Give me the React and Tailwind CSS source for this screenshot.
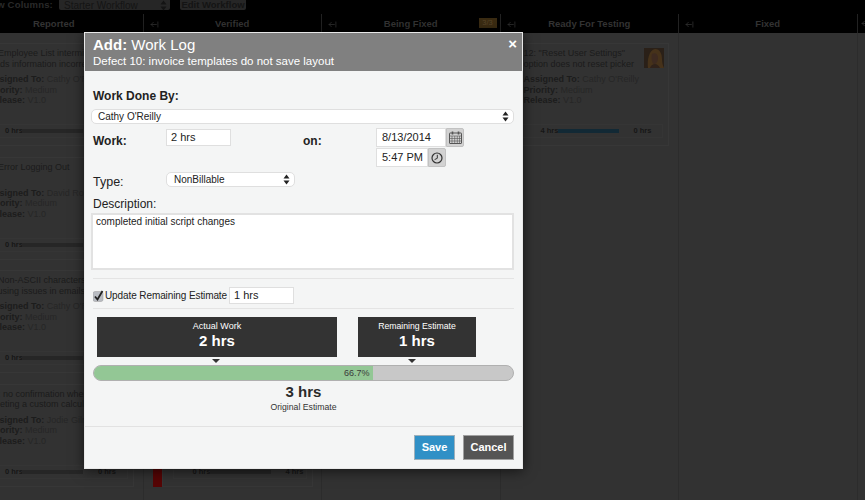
import React from "react";
import { ArrowLeftFromLine } from "lucide-react";

const fontStack = "font-['Liberation_Sans','Arial',sans-serif]";

const Updown = ({ color = "#222" }) => (
  <svg width="7" height="11" viewBox="0 0 7 11" className="shrink-0">
    <path d="M3.5 0.5L6.5 4.5H0.5Z" fill={color} />
    <path d="M3.5 10.5L6.5 6.5H0.5Z" fill={color} />
  </svg>
);

const CalendarIcon = () => (
  <svg width="13" height="13" viewBox="0 0 13 13" fill="none" stroke="#555" strokeWidth="1">
    <rect x="0.5" y="2" width="12" height="10.5" rx="0.5" />
    <path d="M0.5 5h12M0.5 7.5h12M0.5 10h12M3 5v7.5M5.7 5v7.5M8.3 5v7.5M10.5 5v7.5" strokeWidth="0.6" />
    <path d="M3.5 0.5v3M9.5 0.5v3" strokeWidth="1.6" />
  </svg>
);

const ClockIcon = () => (
  <svg width="12" height="12" viewBox="0 0 12 12" fill="none" stroke="#333">
    <circle cx="6" cy="6" r="5" strokeWidth="1.2" />
    <path d="M6.3 2.8V6.3L3.6 7.6" strokeWidth="1" />
  </svg>
);

const HoursBar = ({ left, right, done }) => (
  <div className="mt-auto mb-[7px] ml-[10px] mr-[5px] h-[14px] border border-[#353535] flex items-center pl-[19px] text-[7.5px] font-bold text-[#161616] whitespace-nowrap">
    <span className="w-[15px] shrink-0">{left}</span>
    <div className={`ml-[2px] w-[61px] h-[4px] shrink-0 ${done ? "bg-[#122935]" : "bg-[#262626]"}`} />
    <span className="ml-[15px]">{right}</span>
  </div>
);

const Card = ({ title, second, owner, avatar, left = "0 hrs", right = "0 hrs", done }) => (
  <div className="h-[103px] mx-[9px] mb-[10.5px] border border-[#373737] flex flex-col">
    <div className="flex pl-[13px] pr-[4px] pt-[4px]">
      <div className="flex-1 h-[21px] text-[9px] leading-[10.5px] text-[#1b1b1b] whitespace-nowrap">
        <div>{title}</div>
        <div>{second}</div>
      </div>
      {avatar && (
        <svg width="20" height="20" viewBox="0 0 20 20" className="shrink-0">
          <rect width="20" height="20" fill="#2a2018" />
          <path d="M4 20C3 12 5 2 11 1c5 0 7 5 7 10 0 4 1 7 2 9Z" fill="#46321a" />
          <path d="M8 6c3-2 6 0 6 4s-2 6-4 6-3-6-2-10Z" fill="#3d2a20" />
          <path d="M6 20c1-3 3-4 5-4s4 2 5 4Z" fill="#30221a" />
        </svg>
      )}
    </div>
    <div className="pl-[13px] mt-[5px] text-[9px] leading-[10.5px] text-[#262626] whitespace-nowrap">
      <div><b className="text-[#1c1c1c]">Assigned To:</b> {owner}</div>
      <div><b className="text-[#1c1c1c]">Priority:</b> Medium</div>
      <div><b className="text-[#1c1c1c]">Release:</b> V1.0</div>
    </div>
    <HoursBar left={left} right={right} done={done} />
  </div>
);

const Column = ({ children, className = "" }) => (
  <div className={`w-[178.5px] shrink-0 border-r border-[#2c2c2c] pt-[10px] ${className}`}>{children}</div>
);

const headers = ["Reported", "Verified", "Being Fixed", "Ready For Testing", "Fixed"];

const Board = () => (
  <div className="h-full flex flex-col bg-[#323232]">
    <div className="h-[14px] bg-black flex items-start text-[9.5px] overflow-hidden whitespace-nowrap">
      <b className="w-[53px] shrink-0 flex justify-end text-[#2a2a2a] leading-[9px] tracking-[0.2px]">View Columns:</b>
      <div className="ml-[6px] w-[111px] h-[10px] bg-[#262626] rounded-b-[2px] flex items-center justify-between pl-[5px] pr-[3px] text-[10px] text-[#141414]">
        <span>Starter Workflow</span>
        <Updown color="#141414" />
      </div>
      <div className="ml-[10px] w-[66px] h-[10px] leading-[9px] bg-[#262626] rounded-b-[2px] text-center font-bold text-[#141414]">Edit Workflow</div>
    </div>
    <div className="h-[19px] bg-black flex -ml-[35px] shrink-0">
      {headers.map((h, i) => (
        <div key={h} className="w-[178.5px] shrink-0 border-r border-[#222] relative flex items-center justify-center pt-[1px] text-[9.5px] font-bold text-[#333]">
          {i > 0 && <ArrowLeftFromLine size={9} className="absolute left-[6px] text-[#333]" />}
          {h}
          {i === 2 && (
            <span className="absolute right-[3px] top-[4px] w-[18px] h-[10px] bg-[#3a2b12] text-[7.5px] leading-[10px] text-center font-normal text-[#57452a]">3/3</span>
          )}
        </div>
      ))}
      <div className="pl-[3px] flex items-center"><ArrowLeftFromLine size={9} className="text-[#333]" /></div>
    </div>
    <div className="flex -ml-[35px] flex-1 overflow-hidden">
      <Column>
        <Card title="7: Employee List intermittently" second="loads information incorrectly" owner="Cathy O'Reilly" />
        <Card title="9: Error Logging Out" owner="David Rolf" />
        <Card title="8: Non-ASCII characters" second="causing issues in emails" owner="Cathy O'Reilly" />
        <Card title="14: no confirmation when" second="deleting a custom calculation" owner="Jodie Gilmore" />
      </Column>
      <Column className="relative">
        <div className="mt-[341px] flex">
          <div className="ml-[9px] w-[9px] h-[103px] bg-[#560505] shrink-0" />
          <div className="flex-1 h-[103px] mr-[8px] border border-[#373737] flex flex-col">
            <HoursBar left="0 hrs" right="4 hrs" />
          </div>
        </div>
      </Column>
      <Column />
      <Column>
        <Card title={'12: "Reset User Settings"'} second="option does not reset picker" owner="Cathy O'Reilly" avatar left="4 hrs" done />
      </Column>
      <Column />
    </div>
  </div>
);

const Field = ({ className = "", children }) => (
  <div className={`bg-white border border-[#dfdfdf] text-[#222] flex items-center ${className}`}>{children}</div>
);

const Modal = () => (
  <div className="absolute left-[84px] top-[32px] w-[439px] h-[437px] bg-[#f4f5f5] border border-[#e8e8e8] shadow-[0_2px_12px_rgba(0,0,0,0.6)] text-[#222]">
    <div className="relative h-[38px] bg-[#808080] text-white pl-[8px] pt-[2px]">
      <div className="text-[15px] leading-[19px]"><b>Add:</b> Work Log</div>
      <div className="text-[11.5px] leading-[14px] font-medium">Defect 10: invoice templates do not save layout</div>
      <span className="absolute right-[5px] top-[2px] text-[15px] leading-[18px] font-bold">×</span>
    </div>

    <div className="pl-[6px] pr-[8px]">
      <div className="pl-[2px] mt-[18px] text-[12px] leading-[15px] font-bold">Work Done By:</div>
      <Field className="mt-[5px] h-[15px] rounded-[5px] justify-between pl-[6px] pr-[4px] text-[10px]">
        <span>Cathy O'Reilly</span>
        <Updown />
      </Field>

      <div className="flex mt-[5px] h-[39px]">
        <div className="w-[75px] pl-[2px] pt-[5px] text-[12px] leading-[15px] font-bold">Work:</div>
        <Field className="w-[65px] h-[17px] pl-[4px] text-[11px]">2 hrs</Field>
        <div className="ml-[72px] w-[73px] pt-[5px] text-[12px] leading-[15px] font-bold">on:</div>
        <div className="flex flex-col gap-[1px] text-[11px]">
          <div className="flex -mt-[1px]">
            <Field className="w-[70px] h-[19px] pl-[5px]">8/13/2014</Field>
            <div className="w-[18px] h-[19px] bg-[#d2d2d2] border border-[#c2c2c2] rounded-r-[2px] flex items-center justify-center"><CalendarIcon /></div>
          </div>
          <div className="flex">
            <Field className="w-[52px] h-[19px] pl-[5px]">5:47 PM</Field>
            <div className="w-[18px] h-[19px] bg-[#d2d2d2] border border-[#c2c2c2] rounded-r-[2px] flex items-center justify-center"><ClockIcon /></div>
          </div>
        </div>
      </div>

      <div className="flex mt-[4px]">
        <div className="w-[75px] pl-[2px] pt-[3px] text-[12.5px] leading-[15px]">Type:</div>
        <Field className="w-[129px] h-[15px] rounded-[5px] justify-between pl-[7px] pr-[4px] text-[10px]">
          <span>NonBillable</span>
          <Updown />
        </Field>
      </div>

      <div className="pl-[2px] mt-[7px] text-[12px] leading-[15px]">Description:</div>
      <div className="mt-[1px] h-[57px] bg-white border-2 border-[#e2e2e2] pl-[3px] text-[10px] leading-[14px]">completed initial script changes</div>

      <div className="ml-[2px] mt-[8px] border-t border-[#e4e4e4]" />
      <div className="flex items-center ml-[2px] mt-[8px] h-[17px]">
        <svg width="11" height="12" viewBox="0 0 11 12" className="shrink-0">
          <rect x="0" y="1.5" width="10" height="10" rx="2" fill="#b9bcc2" stroke="#9a9a9a" strokeWidth="0.5" />
          <path d="M2 6.5L4.5 9.5L9.5 1" fill="none" stroke="#222" strokeWidth="1.8" />
        </svg>
        <span className="ml-[1px] w-[124px] text-[10px] tracking-[-0.1px] text-[#222] whitespace-nowrap">Update Remaining Estimate</span>
        <Field className="w-[65px] h-[17px] pl-[4px] text-[11px]">1 hrs</Field>
      </div>
      <div className="ml-[2px] mt-[4px] border-t border-[#e4e4e4]" />

      <div className="flex ml-[6px] mt-[8px] gap-[21px]">
        <div className="w-[240px] h-[40px] bg-[#333] text-white text-center pt-[4px]">
          <div className="text-[9px] leading-[11px]">Actual Work</div>
          <div className="text-[15px] leading-[18px] font-bold">2 hrs</div>
        </div>
        <div className="w-[118px] h-[40px] bg-[#333] text-white text-center pt-[4px]">
          <div className="text-[8.7px] leading-[11px]">Remaining Estimate</div>
          <div className="text-[15px] leading-[18px] font-bold">1 hrs</div>
        </div>
      </div>
      <div className="flex h-[8px] items-center">
        <div className="ml-[121px] w-0 h-0 border-x-[4px] border-x-transparent border-t-[4px] border-t-[#333]" />
        <div className="ml-[188px] w-0 h-0 border-x-[4px] border-x-transparent border-t-[4px] border-t-[#333]" />
      </div>
      <div className="ml-[2px] h-[16px] rounded-full bg-[#c8c8c8] border border-[#b0b0b0] overflow-hidden flex">
        <div className="w-[66.7%] bg-[#93c795] text-right pr-[4px] text-[9px] leading-[14px] text-[#3a3a3a]">66.7%</div>
      </div>
      <div className="text-center mt-[2px] ml-[2px] text-[15px] leading-[18px] font-bold text-[#2a2a2a]">3 hrs</div>
      <div className="text-center ml-[2px] mt-[1px] text-[8.7px] leading-[11px] text-[#333]">Original Estimate</div>
    </div>

    <div className="absolute left-0 right-0 bottom-[41px] border-t border-[#e2e2e2]" />
    <div className="absolute right-[8px] bottom-[8px] flex gap-[8px] text-[11px] font-bold text-white">
      <div className="w-[41px] h-[25px] bg-[#3090c6] border border-[#9fb0ba] flex items-center justify-center">Save</div>
      <div className="w-[51px] h-[25px] bg-[#555] border border-[#a0a0a0] flex items-center justify-center">Cancel</div>
    </div>
  </div>
);

export default function App() {
  return (
    <div className={`relative w-[865px] h-[500px] overflow-hidden ${fontStack}`}>
      <Board />
      <Modal />
    </div>
  );
}
